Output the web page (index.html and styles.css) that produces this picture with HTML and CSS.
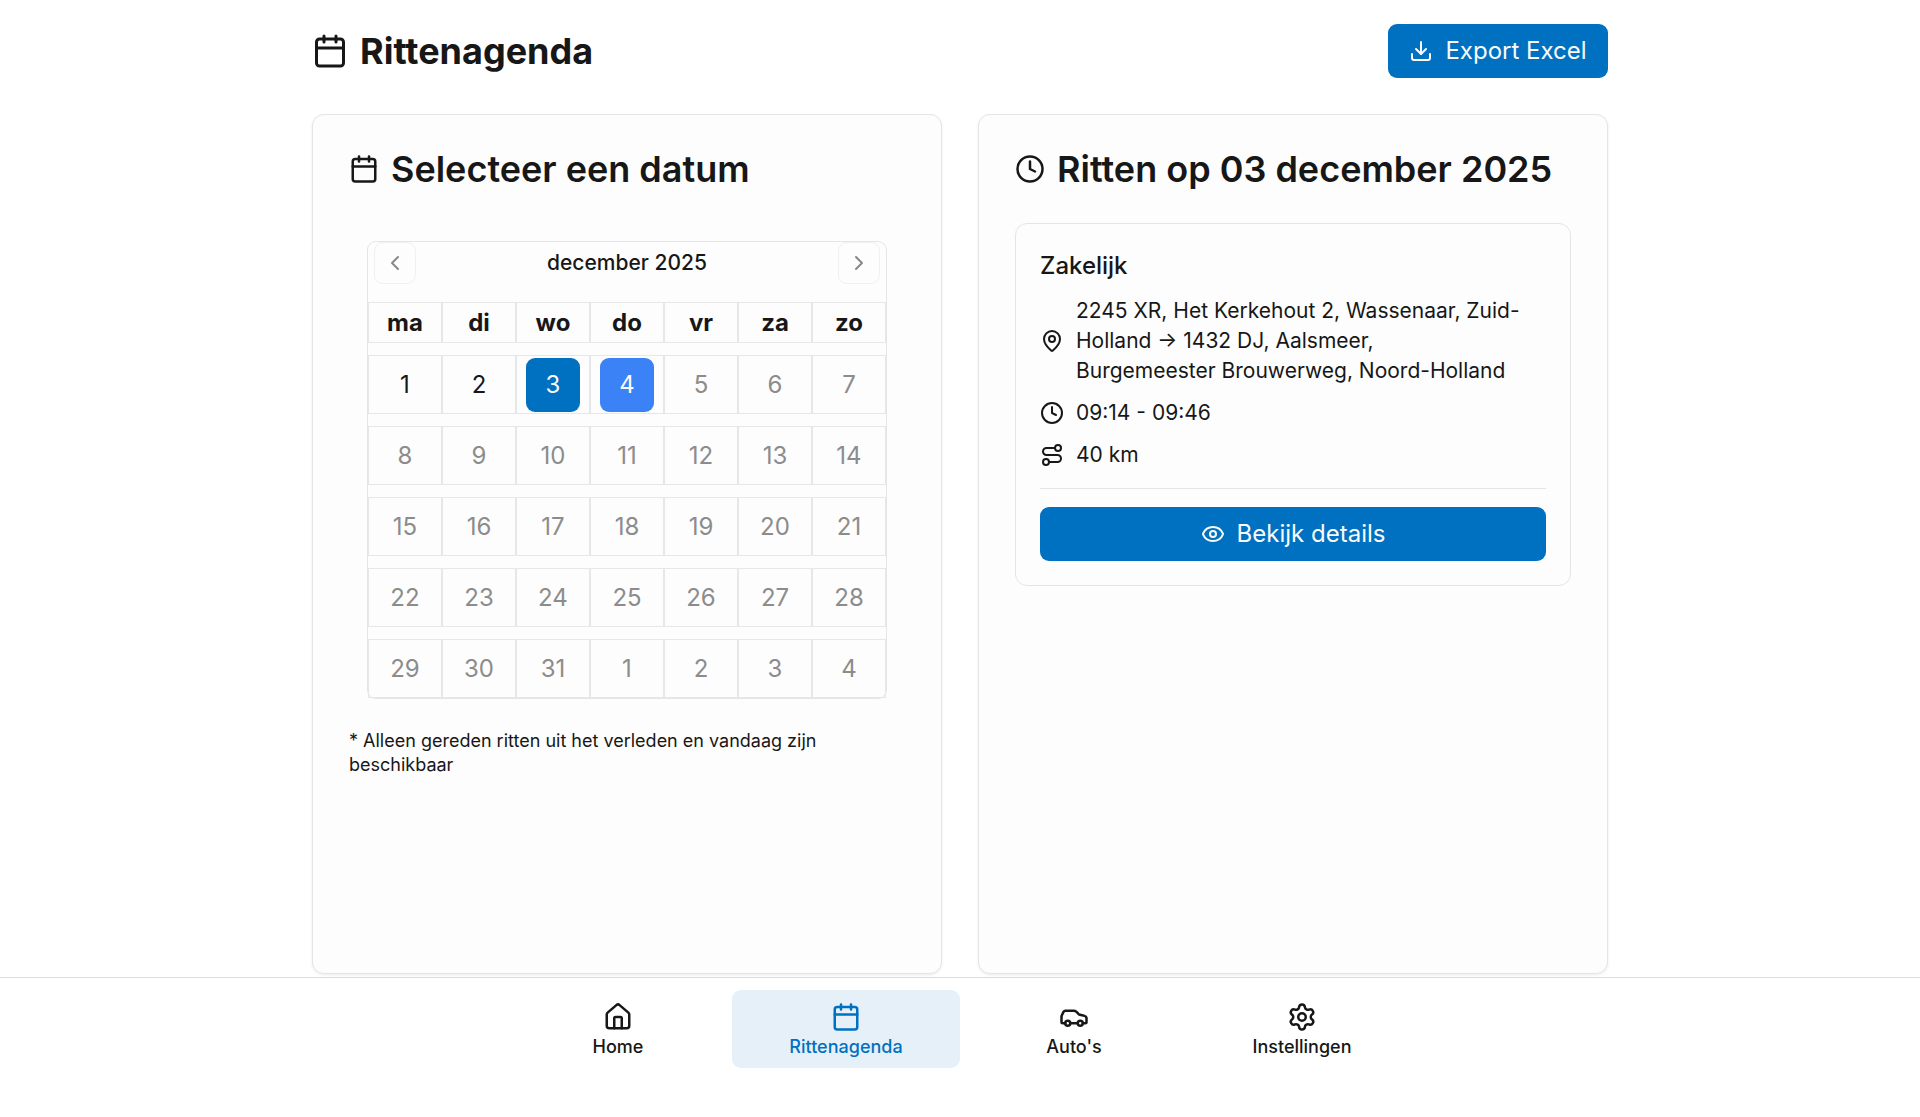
FILE: index.html
```html
<!DOCTYPE html>
<html lang="nl">
<head>
    <meta charset="UTF-8">
    <meta name="viewport" content="width=device-width, initial-scale=1.0">
    <title>Rittenagenda</title>
    <link rel="stylesheet" href="styles.css">
</head>
<body>
    <svg class="sprite" aria-hidden="true">
        <symbol id="icon-calendar" viewBox="0 0 24 24">
            <path d="M8 2v4"/><path d="M16 2v4"/>
            <rect width="18" height="18" x="3" y="4" rx="2"/>
            <path d="M3 10h18"/>
        </symbol>
        <symbol id="icon-clock" viewBox="0 0 24 24">
            <circle cx="12" cy="12" r="10"/>
            <path d="M12 6v6l4 2"/>
        </symbol>
    </svg>

    <main class="page">
        <header class="page-header">
            <h1><svg class="icon icon-xl"><use href="#icon-calendar"/></svg>Rittenagenda</h1>
            <button class="btn" type="button">
                <svg class="icon" viewBox="0 0 24 24"><path d="M12 15V3"/><path d="M21 15v4a2 2 0 0 1-2 2H5a2 2 0 0 1-2-2v-4"/><path d="m7 10 5 5 5-5"/></svg>
                Export Excel
            </button>
        </header>

        <div class="columns">
            <section class="card">
                <h2><svg class="icon icon-lg"><use href="#icon-calendar"/></svg>Selecteer een datum</h2>
                <div class="calendar">
                    <div class="calendar-nav">
                        <button type="button" aria-label="Vorige maand"><svg class="icon" viewBox="0 0 24 24"><path d="m15 18-6-6 6-6"/></svg></button>
                        <span id="month">december 2025</span>
                        <button type="button" aria-label="Volgende maand"><svg class="icon" viewBox="0 0 24 24"><path d="m9 18 6-6-6-6"/></svg></button>
                    </div>
                    <table aria-labelledby="month">
                        <thead>
                            <tr><th>ma</th><th>di</th><th>wo</th><th>do</th><th>vr</th><th>za</th><th>zo</th></tr>
                        </thead>
                        <tbody>
                            <tr>
                                <td><button type="button">1</button></td>
                                <td><button type="button">2</button></td>
                                <td><button type="button" class="selected">3</button></td>
                                <td><button type="button" class="today">4</button></td>
                                <td><button type="button" disabled>5</button></td>
                                <td><button type="button" disabled>6</button></td>
                                <td><button type="button" disabled>7</button></td>
                            </tr>
                            <tr>
                                <td><button type="button" disabled>8</button></td>
                                <td><button type="button" disabled>9</button></td>
                                <td><button type="button" disabled>10</button></td>
                                <td><button type="button" disabled>11</button></td>
                                <td><button type="button" disabled>12</button></td>
                                <td><button type="button" disabled>13</button></td>
                                <td><button type="button" disabled>14</button></td>
                            </tr>
                            <tr>
                                <td><button type="button" disabled>15</button></td>
                                <td><button type="button" disabled>16</button></td>
                                <td><button type="button" disabled>17</button></td>
                                <td><button type="button" disabled>18</button></td>
                                <td><button type="button" disabled>19</button></td>
                                <td><button type="button" disabled>20</button></td>
                                <td><button type="button" disabled>21</button></td>
                            </tr>
                            <tr>
                                <td><button type="button" disabled>22</button></td>
                                <td><button type="button" disabled>23</button></td>
                                <td><button type="button" disabled>24</button></td>
                                <td><button type="button" disabled>25</button></td>
                                <td><button type="button" disabled>26</button></td>
                                <td><button type="button" disabled>27</button></td>
                                <td><button type="button" disabled>28</button></td>
                            </tr>
                            <tr>
                                <td><button type="button" disabled>29</button></td>
                                <td><button type="button" disabled>30</button></td>
                                <td><button type="button" disabled>31</button></td>
                                <td><button type="button" disabled>1</button></td>
                                <td><button type="button" disabled>2</button></td>
                                <td><button type="button" disabled>3</button></td>
                                <td><button type="button" disabled>4</button></td>
                            </tr>
                        </tbody>
                    </table>
                </div>
                <p class="note">* Alleen gereden ritten uit het verleden en vandaag zijn beschikbaar</p>
            </section>

            <section class="card">
                <h2><svg class="icon icon-lg"><use href="#icon-clock"/></svg>Ritten op 03 december 2025</h2>
                <article class="trip">
                    <h3>Zakelijk</h3>
                    <ul>
                        <li>
                            <svg class="icon" viewBox="0 0 24 24"><path d="M20 10c0 4.993-5.539 10.193-7.399 11.799a1 1 0 0 1-1.202 0C9.539 20.193 4 14.993 4 10a8 8 0 0 1 16 0"/><circle cx="12" cy="10" r="3"/></svg>
                            <span>2245 XR, Het Kerkehout 2, Wassenaar, Zuid-Holland → 1432 DJ, Aalsmeer,<br>Burgemeester Brouwerweg, Noord-Holland</span>
                        </li>
                        <li>
                            <svg class="icon"><use href="#icon-clock"/></svg>
                            <span>09:14 - 09:46</span>
                        </li>
                        <li>
                            <svg class="icon" viewBox="0 0 24 24"><circle cx="6" cy="19" r="3"/><path d="M9 19h8.5a3.5 3.5 0 0 0 0-7h-11a3.5 3.5 0 0 1 0-7H15"/><circle cx="18" cy="5" r="3"/></svg>
                            <span>40 km</span>
                        </li>
                    </ul>
                    <div class="trip-footer">
                        <button class="btn btn-block" type="button">
                            <svg class="icon" viewBox="0 0 24 24"><path d="M2.062 12.348a1 1 0 0 1 0-.696 10.75 10.75 0 0 1 19.876 0 1 1 0 0 1 0 .696 10.75 10.75 0 0 1-19.876 0"/><circle cx="12" cy="12" r="3"/></svg>
                            Bekijk details
                        </button>
                    </div>
                </article>
            </section>
        </div>
    </main>

    <nav class="bottom-nav">
        <a href="#home">
            <svg class="icon icon-lg" viewBox="0 0 24 24"><path d="M15 21v-8a1 1 0 0 0-1-1h-4a1 1 0 0 0-1 1v8"/><path d="M3 10a2 2 0 0 1 .709-1.528l7-5.999a2 2 0 0 1 2.582 0l7 5.999A2 2 0 0 1 21 10v9a2 2 0 0 1-2 2H5a2 2 0 0 1-2-2z"/></svg>
            Home
        </a>
        <a href="#rittenagenda" class="active" aria-current="page">
            <svg class="icon icon-lg"><use href="#icon-calendar"/></svg>
            Rittenagenda
        </a>
        <a href="#autos">
            <svg class="icon icon-lg" viewBox="0 0 24 24"><path d="M19 17h2c.6 0 1-.4 1-1v-3c0-.9-.7-1.7-1.5-1.9C18.7 10.6 16 10 16 10s-1.3-1.4-2.2-2.3c-.5-.4-1.1-.7-1.8-.7H5c-.6 0-1.1.4-1.4.9l-1.4 2.9A3.7 3.7 0 0 0 2 12v4c0 .6.4 1 1 1h2"/><circle cx="7" cy="17" r="2"/><path d="M9 17h6"/><circle cx="17" cy="17" r="2"/></svg>
            Auto's
        </a>
        <a href="#instellingen">
            <svg class="icon icon-lg" viewBox="0 0 24 24"><path d="M9.671 4.136a2.34 2.34 0 0 1 4.659 0 2.34 2.34 0 0 0 3.319 1.915 2.34 2.34 0 0 1 2.33 4.033 2.34 2.34 0 0 0 0 3.831 2.34 2.34 0 0 1-2.33 4.033 2.34 2.34 0 0 0-3.319 1.915 2.34 2.34 0 0 1-4.659 0 2.34 2.34 0 0 0-3.32-1.915 2.34 2.34 0 0 1-2.33-4.033 2.34 2.34 0 0 0 0-3.831A2.34 2.34 0 0 1 6.35 6.051a2.34 2.34 0 0 0 3.319-1.915"/><circle cx="12" cy="12" r="3"/></svg>
            Instellingen
        </a>
    </nav>
</body>
</html>
```

FILE: styles.css
```css
:root {
    --primary: #0070c0;
    --text: #171717;
    --border: #e5e5e5;
    --cell-border: #e5e7eb;
    --card: #fdfdfd;
}

* {
    box-sizing: border-box;
}

body {
    display: flex;
    flex-direction: column;
    min-height: 100vh;
    margin: 0;
    background-color: #fff;
    color: var(--text);
    font-family: Inter, "Liberation Sans", sans-serif;
    font-size: 24px;
    line-height: 36px;
}

h1, h2, h3, p, ul {
    margin: 0;
}

button {
    font: inherit;
    color: inherit;
    cursor: pointer;
}

.sprite {
    display: none;
}

.icon {
    flex: none;
    width: 24px;
    height: 24px;
    fill: none;
    stroke: currentColor;
    stroke-width: 2;
    stroke-linecap: round;
    stroke-linejoin: round;
}

.icon-lg {
    width: 30px;
    height: 30px;
}

.icon-xl {
    width: 36px;
    height: 36px;
}

.page {
    display: flex;
    flex: 1;
    flex-direction: column;
    gap: 36px;
    width: 100%;
    max-width: 1344px;
    margin: 0 auto;
    padding: 24px 24px 3px;
}

.page-header {
    display: flex;
    justify-content: space-between;
    align-items: center;
}

h1, h2 {
    display: flex;
    align-items: center;
    gap: 12px;
    font-size: 36px;
    font-weight: 700;
}

h2 {
    font-weight: 600;
}

.btn {
    display: flex;
    justify-content: center;
    align-items: center;
    gap: 12px;
    min-width: 220px;
    height: 54px;
    padding: 0 18px;
    border: none;
    border-radius: 9px;
    background-color: var(--primary);
    color: #fafafa;
}

.btn-block {
    width: 100%;
}

.columns {
    display: grid;
    flex: 1;
    grid-template-columns: 1fr 1fr;
    gap: 36px;
}

.card {
    padding: 36px;
    border: 1px solid var(--border);
    border-radius: 12px;
    background-color: var(--card);
    box-shadow: 0 1px 3px rgba(0, 0, 0, 0.08);
}

/* calendar */
.calendar {
    margin: 54px 18px 0;
    border: 1px solid var(--border);
    border-radius: 9px;
}

.calendar-nav {
    display: flex;
    justify-content: space-between;
    align-items: center;
    padding: 0 6px;
    font-size: 21px;
    font-weight: 500;
}

.calendar-nav button {
    display: flex;
    justify-content: center;
    align-items: center;
    width: 42px;
    height: 42px;
    padding: 0;
    border: 1px solid var(--border);
    border-radius: 9px;
    background: transparent;
    opacity: 0.5;
}

.calendar table,
.calendar thead,
.calendar tbody {
    display: block;
}

.calendar tr {
    display: flex;
    margin-top: 12px;
}

.calendar thead tr {
    margin-top: 18px;
}

.calendar th,
.calendar td {
    display: flex;
    flex: 1;
    justify-content: center;
    align-items: center;
    height: 59px;
    padding: 0;
    border: 1px solid var(--cell-border);
}

.calendar th {
    height: 41px;
    font-weight: 700;
}

.calendar td button {
    width: 54px;
    height: 54px;
    padding: 0;
    border: none;
    border-radius: 9px;
    background: transparent;
}

.calendar td button:disabled {
    color: #8c8c8c;
    cursor: default;
}

.calendar td .selected {
    background-color: var(--primary);
    color: #fafafa;
}

.calendar td .today {
    background-color: #3b82f6;
    color: #fafafa;
}

.note {
    margin-top: 30px;
    font-size: 18px;
    line-height: 24px;
}

/* trip */
.trip {
    margin-top: 36px;
    padding: 24px;
    border: 1px solid var(--border);
    border-radius: 12px;
}

.trip h3 {
    font-size: 24px;
    font-weight: 500;
}

.trip ul {
    display: flex;
    flex-direction: column;
    gap: 12px;
    margin: 12px 0 18px;
    padding: 0;
    list-style: none;
    font-size: 21px;
    line-height: 30px;
}

.trip li {
    display: flex;
    align-items: center;
    gap: 12px;
}

.trip-footer {
    padding-top: 18px;
    border-top: 1px solid var(--border);
}

/* bottom navigation */
.bottom-nav {
    position: relative;
    display: flex;
    justify-content: center;
    padding: 12px 12px 49px;
    border-top: 1px solid #dcdcdc;
    background-color: #fff;
}

.bottom-nav a {
    display: flex;
    flex-direction: column;
    align-items: center;
    gap: 6px;
    width: 228px;
    padding: 12px;
    border-radius: 9px;
    color: var(--text);
    font-size: 18px;
    font-weight: 500;
    line-height: 18px;
    text-decoration: none;
}

.bottom-nav .active {
    background-color: #e5f0f9;
    color: var(--primary);
}
```
